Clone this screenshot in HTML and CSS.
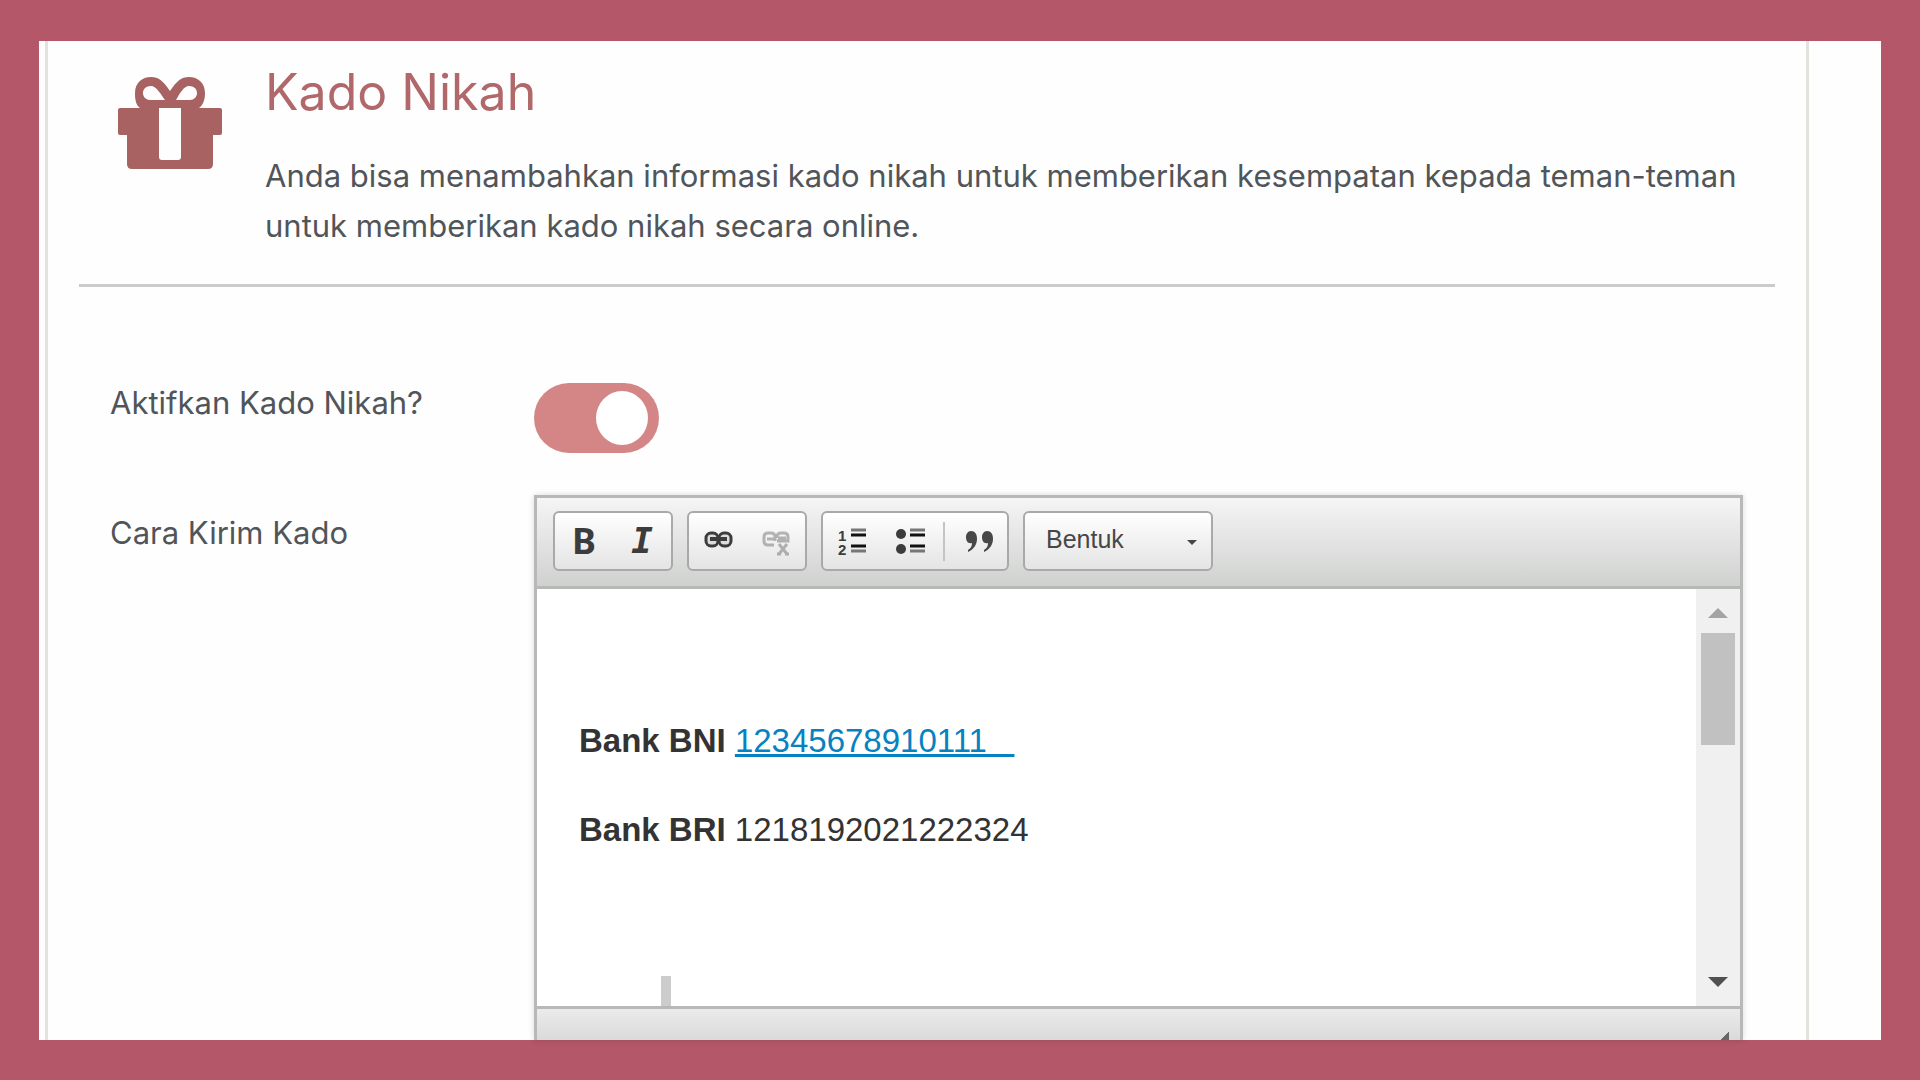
FILE: index.html
```html
<!DOCTYPE html>
<html lang="id">
<head>
    <meta charset="UTF-8">
    <meta name="viewport" content="width=device-width, initial-scale=1.0">
    <title>Kado Nikah</title>
    <link rel="stylesheet" href="styles.css">
</head>
<body>
    <main class="page">
        <section class="card">
            <header class="card-header">
                <svg class="gift-icon" viewBox="0 0 104 92" aria-hidden="true">
                    <path fill-rule="evenodd" d="M2 31h20C18 28 17 23 17 16 17 6 24 0 33 0c8 0 12 4 19 14C59 4 63 0 71 0c9 0 16 6 16 16 0 7-2 12-6 15h21q2 0 2 2v23q0 2-2 2h-7v29q0 5-5 5H14q-5 0-5-5V58H2q-2 0-2-2V33q0-2 2-2zM33 9c-5 0-8 3-8 7s3 7 7 7h15C42 16 38 9 33 9zM71 9c-5 0-9 7-13 14h14c4 0 7-3 7-7s-3-7-8-7zM41 31v49q0 3 3 3h16q3 0 3-3V31z"/>
                </svg>
                <div class="card-heading">
                    <h1>Kado Nikah</h1>
                    <p>Anda bisa menambahkan informasi kado nikah untuk memberikan kesempatan kepada teman-teman untuk memberikan kado nikah secara online.</p>
                </div>
            </header>

            <form class="settings">
                <label class="field-label" for="aktif">Aktifkan Kado Nikah?</label>
                <div class="toggle-row">
                    <input type="checkbox" id="aktif" class="toggle" checked>
                </div>

                <span class="field-label editor-label" id="cara-label">Cara Kirim Kado</span>
                <div class="editor">
                    <div class="toolbar">
                        <div class="tool-group">
                            <button type="button" class="bold" aria-label="Tebal">B</button>
                            <button type="button" class="italic" aria-label="Miring">I</button>
                        </div>
                        <div class="tool-group">
                            <button type="button" aria-label="Tautan">
                                <svg viewBox="0 0 58 56">
                                    <g fill="#ddd" stroke="#3c3c3c" stroke-width="3">
                                        <rect x="17" y="20" width="12" height="13" rx="5"/>
                                        <rect x="30" y="20" width="12" height="13" rx="5"/>
                                        <path d="M21 26h17" stroke-width="4"/>
                                    </g>
                                </svg>
                            </button>
                            <button type="button" aria-label="Hapus tautan" disabled>
                                <svg viewBox="0 0 58 56">
                                    <g fill="none" stroke="#3c3c3c" stroke-width="3">
                                        <path d="M28 28v-4q0-4-4-4h-3q-4 0-4 4v4q0 4 4 4h6M20 26h8M30 25v-1q0-4 4-4h3q4 0 4 4v4H30M31 25h8"/>
                                        <path d="M32 31l8 10M40 31l-8 10M30 41h4M38 41h4"/>
                                    </g>
                                </svg>
                            </button>
                        </div>
                        <div class="tool-group">
                            <button type="button" aria-label="Daftar bernomor">
                                <svg viewBox="0 0 58 56">
                                    <text x="15" y="28">1</text>
                                    <text x="15" y="42">2</text>
                                    <path d="M28 17h15M28 38h15" stroke="#777" stroke-width="3"/>
                                    <path d="M28 22h15M28 33h15" stroke="#111" stroke-width="3"/>
                                </svg>
                            </button>
                            <button type="button" aria-label="Daftar poin">
                                <svg viewBox="0 0 58 56">
                                    <circle cx="20" cy="21" r="5" fill="#3c3c3c"/>
                                    <circle cx="20" cy="36" r="5" fill="#3c3c3c"/>
                                    <path d="M29 17h15M29 38h15" stroke="#777" stroke-width="3"/>
                                    <path d="M29 22h15M29 33h15" stroke="#111" stroke-width="3"/>
                                </svg>
                            </button>
                            <span class="separator"></span>
                            <button type="button" aria-label="Kutipan">
                                <svg viewBox="0 0 58 56">
                                    <path fill="#484848" d="M22 18c4 0 6 3 6 8 0 6-4 11-9 13v-2c3-2 4-4 4-7-4 1-6-2-6-6 0-3 2-6 5-6zM38 18c4 0 6 3 6 8 0 6-4 11-9 13v-2c3-2 4-4 4-7-4 1-6-2-6-6 0-3 2-6 5-6z"/>
                                </svg>
                            </button>
                        </div>
                        <div class="combo">
                            <select aria-label="Bentuk">
                                <option>Bentuk</option>
                            </select>
                        </div>
                    </div>

                    <div class="editor-body">
                        <div class="content" contenteditable="true" role="textbox" aria-labelledby="cara-label" spellcheck="false">
                            <p><b>Bank BNI</b> <a href="#">12345678910111&nbsp;&nbsp;&nbsp;</a></p>
                            <p><b>Bank BRI</b> 1218192021222324</p>
                            <blockquote></blockquote>
                        </div>
                        <div class="scrollbar">
                            <span class="arrow-up"></span>
                            <span class="thumb"></span>
                            <span class="arrow-down"></span>
                        </div>
                    </div>

                    <div class="editor-footer">
                        <span class="resizer"></span>
                    </div>
                </div>
            </form>
        </section>
    </main>
</body>
</html>
```
FILE: styles.css
```css
* { box-sizing: border-box; }
body { margin: 0; padding: 41px 39px; background-color: #b45768; font-family: Inter, "Liberation Sans", sans-serif; font-size: 31px; color: #50555a; }
.page { background-color: #fefefe; padding: 0 72px 0 6px; }
.card { border: solid #e5e1dd; border-width: 0 3px; padding: 0 31px; }

.card-header { display: flex; gap: 43px; padding: 21px 30px 33px 39px; border-bottom: 3px solid #cbcbcb; }
.gift-icon { flex: none; width: 104px; height: 92px; margin-top: 15px; fill: #a86262; }
.card-heading { flex: 1; }
h1 { margin: 0 0 29px; font-size: 50px; font-weight: 400; line-height: 60px; color: #b0686b; }
.card-heading p { margin: 0; line-height: 50px; }

.settings { display: grid; grid-template-columns: 424px 1fr; row-gap: 42px; padding: 96px 32px 0 31px; }
.field-label { line-height: 40px; }
.editor-label { padding-top: 18px; }
.toggle-row { height: 70px; }

.toggle { appearance: none; display: flex; justify-content: flex-end; align-items: center; width: 125px; height: 70px; margin: 0; padding: 0 11px; border-radius: 35px; background-color: #d48686; cursor: pointer; }
.toggle::before { content: ""; width: 52px; height: 54px; border-radius: 50%; background-color: #fff; }
.toggle:not(:checked) { justify-content: flex-start; background-color: #ccc; }

.editor { border: 3px solid #b8b8b8; border-bottom: 0; box-shadow: 0 0 6px rgba(0,0,0,0.15); }
.toolbar { display: flex; gap: 14px; padding: 13px 16px 15px; border-bottom: 3px solid #b8b8b8; background: linear-gradient(#f5f5f5, #cfd1cf); }
.tool-group, .combo { display: flex; align-items: center; height: 60px; border: 2px solid #a9a9a9; border-radius: 6px; background: linear-gradient(#fff, #e4e4e4); }
.tool-group button { width: 58px; height: 56px; padding: 0; border: 0; background: none; font-size: 36px; font-weight: 700; line-height: 56px; color: #3c3c3c; cursor: pointer; }
.tool-group button:disabled { opacity: 0.35; }
.tool-group .bold { font-family: "Noto Sans", sans-serif; }
.tool-group .italic { font-family: "DejaVu Sans Mono", monospace; font-style: italic; }
.tool-group svg { display: block; width: 58px; height: 56px; }
.tool-group text { font: bold 15px "Liberation Sans", sans-serif; fill: #3c3c3c; }
.separator { width: 2px; height: 39px; margin: 0 4px; background-color: #c4c4c4; }
.combo { position: relative; width: 190px; }
.combo select { appearance: none; width: 100%; height: 56px; padding: 0 21px 4px; border: 0; background: none; font: 25px "Liberation Sans", Arial, sans-serif; color: #474747; }
.combo::after { content: ""; position: absolute; right: 14px; top: 27px; border: 5px solid transparent; border-top-color: #474747; border-bottom: 0; pointer-events: none; }

.editor-body { display: flex; height: 417px; background-color: #fff; }
.content { flex: 1; padding: 125px 42px 0; overflow: hidden; outline: none; font: 33px/53px "Liberation Sans", Arial, sans-serif; color: #333; }
.content p { margin: 0 0 36px; }
.content a { color: #0782c1; text-decoration-thickness: 3px; }
.content blockquote { height: 60px; margin: 120px 82px 0; border-left: 10px solid #ccc; }
.scrollbar { display: flex; flex-direction: column; align-items: center; width: 44px; padding: 19px 0; background-color: #f0f0f0; }
.thumb { width: 34px; height: 112px; margin: 15px 0 auto; background-color: #c1c1c1; }
.arrow-up, .arrow-down { border: 10px solid transparent; }
.arrow-up { border-top: 0; border-bottom-color: #a3a3a3; }
.arrow-down { border-bottom: 0; border-top-color: #505050; }
.editor-footer { display: flex; justify-content: flex-end; align-items: flex-end; height: 34px; padding: 0 11px; border-top: 3px solid #b8b8b8; background: linear-gradient(#ebebeb, #dadada); }
.resizer { width: 9px; height: 8px; background: linear-gradient(135deg, transparent 50%, #666 50%); }
```
